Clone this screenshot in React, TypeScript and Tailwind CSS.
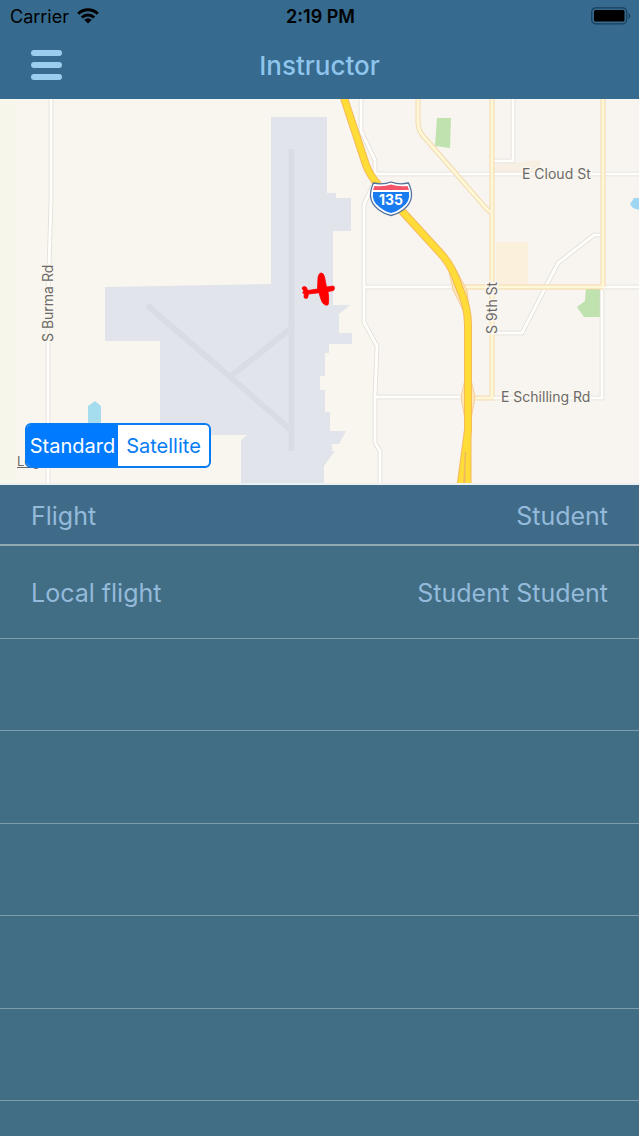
import { useState } from 'react'
import clsx from 'clsx'

const flights = [{ flight: 'Local flight', student: 'Student Student' }]

const emptyRows = 6

const mapTypes = ['Standard', 'Satellite']

// Streets are stroked twice: the casing first, then the fill on top.
const whiteRoads = [
  'M51 95 V200 L48 300 V490',
  'M361 95 V131 L375 160 V174 H639',
  'M375 181 L364 204 V322 L377 346 L375 396 V443 L380 451 V490',
  'M364 287 H462',
  'M602 287 H639',
  'M492 161 H513 V95',
  'M375 397 H460',
  'M492 398 H602 V287',
  'M492 333 H522 L558 263 L594 235 H602',
]

const yellowRoads = [
  'M418 95 V124 Q419 132 424 137 L484 206 Q488 211 492 213',
  'M492 95 V213 V398',
  'M603 95 V287',
  'M460 287 H603',
  'M468 398 H494',
]

const highway =
  'M343 95 L366 165 Q370 176 380 187 L443 256 Q453 268 459 287 Q468 306 468 325 V430 L460 490'

function WifiIcon() {
  return (
    <svg viewBox="0 0 22 16" className="h-4 w-[22px]" aria-hidden="true">
      <g fill="none" stroke="#000" strokeWidth="3">
        <path d="M1.2 5.8 A14 14 0 0 1 20.8 5.8" />
        <path d="M4.8 9.5 A9 9 0 0 1 17.2 9.5" />
      </g>
      <path d="M7.2 11.8 Q11 8.6 14.8 11.8 L11 15.6 Z" />
    </svg>
  )
}

function BatteryIcon() {
  return (
    <svg viewBox="0 0 40 18" className="h-[18px] w-10" aria-hidden="true">
      <rect x="0.7" y="0.8" width="35" height="16" rx="4" fill="none" stroke="#173f5c" strokeWidth="1.2" />
      <rect x="3" y="3" width="30.5" height="11.5" rx="1.5" />
      <path d="M37.5 6 Q39.3 7 39.3 9 Q39.3 11 37.5 12 Z" fill="#173f5c" />
    </svg>
  )
}

function Plane() {
  return (
    <path
      d="M321.500 273 Q323.500 273 324.500 277 L326.500 287 L333.500 286 Q335.500 288 333.500 290.500 L328 291.500 Q329 297 328.500 303 Q328.500 306 325.500 305 Q322 304 320.500 298 L319 292.800 L308.500 294 L307.500 298 Q305.500 299 304 297.500 L304.300 293.800 Q301 292.500 304 291.500 L302 288 Q303 285.500 306 287 L308 290.500 L317.500 289 L318 278 Q318.500 273 321.500 273 Z"
      fill="#ff0000"
      stroke="#ff0000"
      strokeWidth="0.8"
      strokeLinejoin="round"
    />
  )
}

function InterstateShield() {
  return (
    <g>
      <path
        d="M373.500 183 Q383 185 391 182 Q399 185 408.500 183 Q411.800 190 411.500 196 Q411 204 403 210 Q397 214.500 391 215.500 Q385 214.500 379 210 Q371 204 370.500 196 Q370.200 190 373.500 183 Z"
        fill="#fff"
        stroke="#52719c"
        strokeWidth="1.300"
      />
      <path d="M374.500 186 Q384 187 391 184.500 Q398 187 407.500 186 L409 190 H373 Z" fill="#f45468" />
      <path d="M373 192 H409 Q410.500 202 402 207.500 Q396 212 391 213 Q386 212 380 207.500 Q371.500 202 373 192 Z" fill="#187bf0" />
      <text x="391" y="205" textAnchor="middle" fontSize="14" fontWeight="700" fill="#fff">
        135
      </text>
    </g>
  )
}

function AirportMap() {
  return (
    <svg
      viewBox="0 99 639 386"
      className="block w-full bg-[#f9f6ef] font-[Inter,sans-serif]"
      role="img"
      aria-label="Airport map"
    >
      <path d="M361 99 H639 V485 H380 V445 L375 345 L362 325 Z" fill="#f8f4ef" />
      <path d="M0 99 H16 V485 H0 Z" fill="#f6f6ea" />

      <path
        d="M271 117 H327 V193 H336 V198 H351 V231 H333 V305 H350 L339 314 V333 H352 V344 H329 V353 H325 V376 H320 V390 H325 V412 H330 V431 H346 L339 444 H332 V451 H335 L324 466 V485 H241 V440 L247 435 H160 V341 H105 V287 L271 284 Z"
        fill="#e2e4eb"
      />
      <g fill="none" stroke="#d7dde3" strokeWidth="6">
        <path d="M291.500 149 V451" />
        <path d="M147 305 L290 429" />
        <path d="M230 377 L290 329" />
      </g>

      <path d="M437 118 H451 L450 148 L435 146 Z" fill="#bfe2af" />
      <path d="M586 288 H601 V317 H584 L577 307 L585 301 Z" fill="#bfe2af" />
      <path d="M496 242 H528 V284 H496 Z" fill="#faf0db" />
      <path d="M494 165 L540 160 V172 H494 Z" fill="#f7efe2" />
      <path d="M88 406 L95 401 L101 406 V424 H88 Z" fill="#a5dcee" />
      <path d="M630 204 L634 198 H639 V210 L633 208 Z" fill="#9ed6f3" />

      <g fill="none" stroke="#dfdcd6" strokeWidth="4.500">
        {whiteRoads.map((d) => (
          <path key={d} d={d} />
        ))}
      </g>
      <g fill="none" stroke="#fffefb" strokeWidth="3">
        {whiteRoads.map((d) => (
          <path key={d} d={d} />
        ))}
      </g>
      <g fill="none" stroke="#f2d6a6" strokeWidth="4.800">
        {yellowRoads.map((d) => (
          <path key={d} d={d} />
        ))}
      </g>
      <g fill="none" stroke="#fff8d8" strokeWidth="3">
        {yellowRoads.map((d) => (
          <path key={d} d={d} />
        ))}
      </g>

      <g fill="#fbe6bd" stroke="#f6cf97" strokeWidth="1">
        <path d="M447 262 L453 290 L464 312 L470 320 L467 290 L455 268 Z" />
        <path d="M466 375 L461 397 L466 425 H470 L475 397 L470 375 Z" />
      </g>
      <g fill="none" stroke="#f5b95a">
        <path d={highway} strokeWidth="8" />
        <path d="M468 420 V490" strokeWidth="7" />
      </g>
      <g fill="none" stroke="#ffdc38">
        <path d={highway} strokeWidth="6" />
        <path d="M468 420 V490" strokeWidth="5" />
      </g>
      <path d="M465.500 452 L464 485" fill="none" stroke="#f0b860" strokeWidth="1.500" />

      <g fontSize="14" fill="#6c6a68" stroke="#f9f6ef" strokeWidth="3" paintOrder="stroke">
        <text x="522" y="179">E Cloud St</text>
        <text x="501" y="402">E Schilling Rd</text>
        <text transform="translate(53 342) rotate(-90)">S Burma Rd</text>
        <text transform="translate(497 334) rotate(-90)">S 9th St</text>
      </g>

      <InterstateShield />
      <Plane />
      <path d="M0 484 H639" stroke="#e9f1f3" strokeWidth="2" />
    </svg>
  )
}

export default function App() {
  const [mapType, setMapType] = useState('Standard')

  return (
    <div className="flex min-h-screen flex-col overflow-hidden bg-[#416d85] font-[Inter,sans-serif]">
      <header className="bg-[#366a8e]">
        <div className="grid h-8 grid-cols-3 items-center pr-2 pl-[10px] text-[18px] text-black">
          <div className="flex items-center gap-2">
            Carrier
            <WifiIcon />
          </div>
          <time className="text-center font-semibold">2:19 PM</time>
          <div className="flex justify-end">
            <BatteryIcon />
          </div>
        </div>

        <div className="grid h-[67px] grid-cols-[64px_1fr_64px] items-center">
          <button type="button" aria-label="Menu" className="flex flex-col gap-[6px] pb-[2px] pl-[31px]">
            <span className="h-[6px] w-[31px] rounded-full bg-[#9bcdee]" />
            <span className="h-[6px] w-[31px] rounded-full bg-[#9bcdee]" />
            <span className="h-[6px] w-[31px] rounded-full bg-[#9bcdee]" />
          </button>
          <h1 className="text-center text-[26px] font-medium text-[#8fc5ec]">Instructor</h1>
        </div>
      </header>

      <section className="relative">
        <AirportMap />
        <a href="#legal" className="absolute bottom-[14px] left-[17px] text-[13px] text-[#6c6a68] underline">
          Legal
        </a>
        <div className="absolute bottom-[17px] left-[25px] flex h-[45px] overflow-hidden rounded-md border-2 border-[#087cf5] bg-white">
          {mapTypes.map((type) => (
            <button
              key={type}
              type="button"
              aria-pressed={mapType === type}
              onClick={() => setMapType(type)}
              className={clsx(
                'w-[91px] text-[20px]',
                mapType === type ? 'bg-[#007aff] text-white' : 'text-[#087cf5]',
              )}
            >
              {type}
            </button>
          ))}
        </div>
      </section>

      <table className="w-full border-separate border-spacing-0 text-[25px] text-[#94badb]">
        <thead>
          <tr className="h-[61px] bg-[#406b88]">
            <th className="border-b-2 border-[#91a8b3] pt-1 pl-[31px] text-left font-normal">Flight</th>
            <th className="border-b-2 border-[#91a8b3] pt-1 pr-[31px] text-right font-normal">Student</th>
          </tr>
        </thead>
        <tbody>
          {flights.map((item) => (
            <tr key={item.flight} className="odd:h-[93px] even:h-[92px]">
              <td className="border-b border-[#7d9cad] pt-1 pl-[31px]">{item.flight}</td>
              <td className="border-b border-[#7d9cad] pt-1 pr-[31px] text-right">{item.student}</td>
            </tr>
          ))}
          {Array.from({ length: emptyRows - flights.length }, (_, index) => (
            <tr key={index} className="odd:h-[93px] even:h-[92px]">
              <td colSpan={2} className="border-b border-[#7d9cad]" />
            </tr>
          ))}
        </tbody>
      </table>
    </div>
  )
}
